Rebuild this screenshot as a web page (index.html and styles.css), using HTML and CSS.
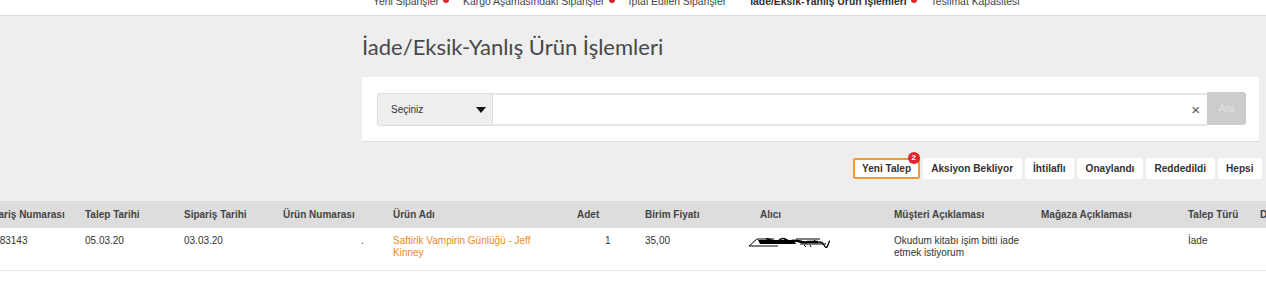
FILE: index.html
```html
<!DOCTYPE html>
<html lang="tr">
<head>
<meta charset="utf-8">
<title>İade/Eksik-Yanlış Ürün İşlemleri</title>
<link rel="stylesheet" href="styles.css">
</head>
<body>
<header class="topnav">
  <ul class="nav">
    <li class="nav-item">Yeni Siparişler<span class="dot"></span></li>
    <li class="nav-item">Kargo Aşamasındaki Siparişler<span class="dot"></span></li>
    <li class="nav-item">İptal Edilen Siparişler</li>
    <li class="nav-item active">İade/Eksik-Yanlış Ürün İşlemleri<span class="dot"></span></li>
    <li class="nav-item">Teslimat Kapasitesi</li>
  </ul>
</header>

<section class="hero">
  <div class="hero-inner">
    <h1 class="title">İade/Eksik-Yanlış Ürün İşlemleri</h1>
    <div class="search-card">
      <div class="select"><span>Seçiniz</span><span class="caret"></span></div>
      <div class="input"><span class="clear">×</span></div>
      <button class="search-btn">Ara</button>
    </div>
  </div>
  <div class="filters">
    <button class="fbtn active">Yeni Talep<span class="badge">2</span></button>
    <button class="fbtn">Aksiyon Bekliyor</button>
    <button class="fbtn">İhtilaflı</button>
    <button class="fbtn">Onaylandı</button>
    <button class="fbtn">Reddedildi</button>
    <button class="fbtn">Hepsi</button>
  </div>
</section>

<div class="table-wrap">
  <table class="grid">
    <colgroup>
      <col class="c1"><col class="c2"><col class="c3"><col class="c4"><col class="c5"><col class="c6">
      <col class="c7"><col class="c8"><col class="c9"><col class="c10"><col class="c11"><col class="c12">
    </colgroup>
    <thead>
      <tr>
        <th>Sipariş Numarası</th>
        <th>Talep Tarihi</th>
        <th>Sipariş Tarihi</th>
        <th>Ürün Numarası</th>
        <th>Ürün Adı</th>
        <th>Adet</th>
        <th>Birim Fiyatı</th>
        <th>Alıcı</th>
        <th>Müşteri Açıklaması</th>
        <th>Mağaza Açıklaması</th>
        <th>Talep Türü</th>
        <th>Durum</th>
      </tr>
    </thead>
    <tbody>
      <tr>
        <td>10283143</td>
        <td>05.03.20</td>
        <td>03.03.20</td>
        <td class="prod-no">.</td>
        <td class="prod-name">Saftirik Vampirin Günlüğü - Jeff Kinney</td>
        <td class="qty">1</td>
        <td>35,00</td>
        <td class="buyer">
          <svg class="scribble" width="84" height="12" viewBox="0 0 84 12">
            <path d="M1 10 L9 3 L26 3" fill="none" stroke="#000" stroke-width="1"/>
            <path d="M1 10 L30 10" fill="none" stroke="#000" stroke-width="1"/>
            <path d="M10 4 L46 4 L48 8 L12 8 Z" fill="#000"/>
            <path d="M18 3 C22 1 26 9 30 5 S38 2 42 7" fill="none" stroke="#000" stroke-width="1.6"/>
            <path d="M44 5 C50 3 54 8 60 6 L70 6" fill="none" stroke="#000" stroke-width="2.4"/>
            <path d="M48 3 L72 3 M52 8 L78 8" fill="none" stroke="#000" stroke-width="1.2"/>
            <path d="M66 4 C70 10 72 2 76 9 S80 5 82 5" fill="none" stroke="#000" stroke-width="1.3"/>
            <path d="M56 9 L58 11 M62 9 L63 11" fill="none" stroke="#000" stroke-width="1"/>
          </svg>
        </td>
        <td>Okudum kitabı işim bitti iade etmek istiyorum</td>
        <td></td>
        <td>İade</td>
        <td></td>
      </tr>
    </tbody>
  </table>
</div>
</body>
</html>
```

FILE: styles.css
```css
html, body {
  margin: 0;
  padding: 0;
  background: #fff;
  font-family: "Liberation Sans", Arial, sans-serif;
  width: 1266px;
  overflow: hidden;
}

/* top navigation (scrolled, only lower half visible) */
.topnav {
  height: 15px;
  border-bottom: 1px solid #dcdcdc;
  background: #fff;
  overflow: hidden;
}
.nav {
  display: flex;
  gap: 24px;
  margin: -4px 0 0;
  padding: 0 0 0 373px;
  list-style: none;
  font-size: 10.4px;
  line-height: 12px;
  color: #444;
}
.nav-item {
  position: relative;
  white-space: nowrap;
}
.nav-item.active {
  font-weight: bold;
  color: #333;
}
.dot {
  position: absolute;
  left: calc(100% + 4px);
  top: 1px;
  width: 6px;
  height: 6px;
  border-radius: 50%;
  background: #e0242b;
}

/* grey header area */
.hero {
  background: #eeeeee;
  padding: 18px 0 22px;
}
.hero-inner {
  margin-left: 362px;
  width: 897px;
}
.title {
  margin: 0 0 17px;
  font-family: Lato, "Open Sans", sans-serif;
  font-weight: normal;
  font-size: 22px;
  line-height: 1.2;
  color: #484848;
}

.search-card {
  display: flex;
  background: #fff;
  border-bottom: 1px solid #dcdcdc;
  padding: 16px 13px 15px 15px;
}
.select {
  width: 116px;
  height: 33px;
  box-sizing: border-box;
  display: flex;
  align-items: center;
  justify-content: space-between;
  padding: 0 6px 0 13px;
  background: #eeeeee;
  border: 1px solid #dddddd;
  border-radius: 2px 0 0 2px;
  font-size: 10px;
  color: #333;
}
.caret {
  width: 0;
  height: 0;
  border-left: 5px solid transparent;
  border-right: 5px solid transparent;
  border-top: 6px solid #111;
}
.input {
  flex: 1;
  height: 33px;
  box-sizing: border-box;
  border-top: 2px solid #e6e6e6;
  border-bottom: 2px solid #e6e6e6;
  display: flex;
  align-items: center;
  justify-content: flex-end;
  padding-right: 7px;
}
.clear {
  font-size: 15px;
  line-height: 1;
  color: #555;
}
.search-btn {
  width: 39px;
  height: 33px;
  margin-top: -1px;
  border: none;
  border-radius: 0 3px 3px 0;
  background: #cccccc;
  color: #e2e2e2;
  font-family: "Liberation Sans", Arial, sans-serif;
  font-size: 10px;
  padding: 0;
}

/* status filters */
.filters {
  display: flex;
  justify-content: flex-end;
  gap: 3px;
  margin-top: 16px;
  padding-right: 4px;
}
.fbtn {
  position: relative;
  height: 21px;
  box-sizing: border-box;
  padding: 0 6.5px;
  border: 2px solid #fff;
  border-radius: 2px;
  background: #fff;
  font-family: "Liberation Sans", Arial, sans-serif;
  font-weight: bold;
  font-size: 10.1px;
  color: #333;
  white-space: nowrap;
}
.fbtn.active {
  border-color: #f29a2e;
}
.badge {
  position: absolute;
  top: -8px;
  right: -2px;
  width: 12px;
  height: 12px;
  border-radius: 50%;
  background: #e3242b;
  color: #fff;
  font-size: 8px;
  line-height: 12px;
  text-align: center;
  font-weight: bold;
}

/* table */
.table-wrap {
  overflow: hidden;
}
.grid {
  margin-left: -25px;
  width: 1357px;
  table-layout: fixed;
  border-collapse: collapse;
}
.c1 { width: 102px; }
.c2 { width: 99px; }
.c3 { width: 99px; }
.c4 { width: 110px; }
.c5 { width: 184px; }
.c6 { width: 68px; }
.c7 { width: 115px; }
.c8 { width: 134px; }
.c9 { width: 147px; }
.c10 { width: 147px; }
.c11 { width: 72px; }
.c12 { width: 80px; }

.grid th {
  height: 27px;
  padding: 0 8px;
  background: #dddddd;
  text-align: left;
  font-weight: bold;
  font-size: 10px;
  color: #444;
  white-space: nowrap;
  overflow: hidden;
}
.grid td {
  padding: 7px 4px 11px 8px;
  vertical-align: top;
  font-size: 10px;
  line-height: 12px;
  color: #333;
  border-bottom: 1px solid #e6e6e6;
  white-space: normal;
}
.grid td:first-child {
  white-space: nowrap;
}
.grid .prod-no {
  padding-left: 86px;
}
.grid .prod-name {
  color: #ef8a24;
  padding-right: 16px;
}
.grid .qty {
  padding-left: 36px;
}
.scribble {
  display: block;
  margin: 1px 0 0 -12px;
}
```
